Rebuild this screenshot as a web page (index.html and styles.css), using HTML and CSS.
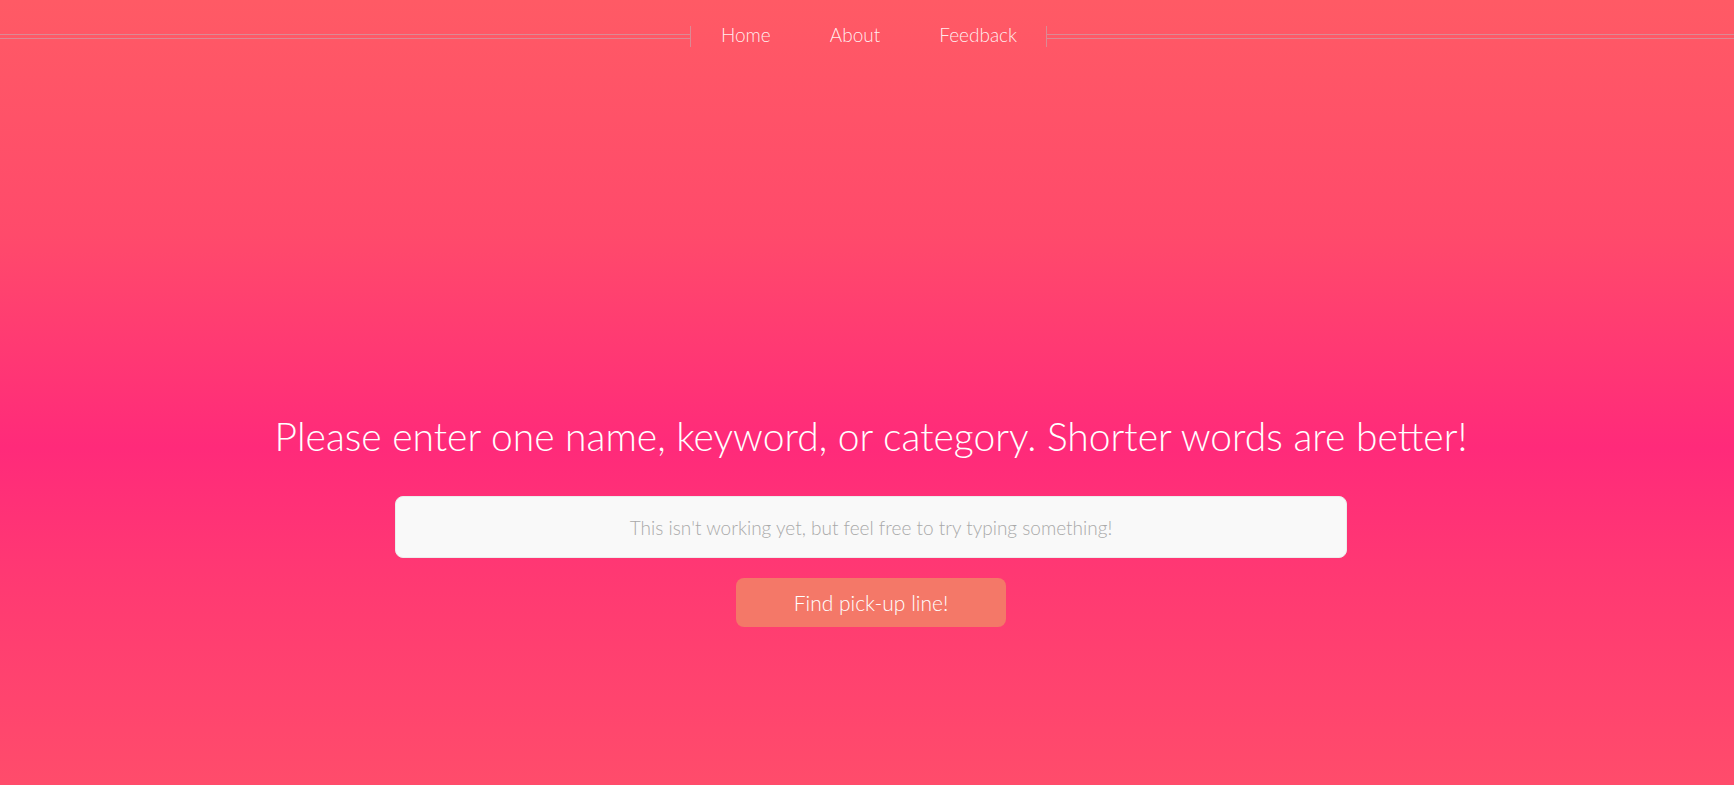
FILE: index.html
```html
<!DOCTYPE html>
<html lang="en">
<head>
<meta charset="utf-8">
<title>Pick-up lines</title>
<link rel="stylesheet" href="styles.css">
</head>
<body>
<header class="topbar">
  <span class="rule rule-left"></span>
  <nav class="menu">
    <a class="menu-link" href="#">Home</a>
    <a class="menu-link" href="#">About</a>
    <a class="menu-link" href="#">Feedback</a>
  </nav>
  <span class="rule"></span>
</header>
<main class="hero">
  <h1 class="prompt">Please enter one name, keyword, or category. Shorter words are better!</h1>
  <form class="search" onsubmit="return false">
    <input class="search-input" type="text" placeholder="This isn't working yet, but feel free to try typing something!">
    <button class="search-button" type="submit">Find pick-up line!</button>
  </form>
</main>
</body>
</html>
```
FILE: styles.css
```css
html, body {
  margin: 0;
  padding: 0;
}
body {
  min-height: 100vh;
  background: linear-gradient(to bottom, #ff5a65 0%, #ff4a6b 30%, #ff2a7a 57%, #ff3a72 75%, #ff4c6b 100%);
  font-family: Lato, "Open Sans", "Liberation Sans", sans-serif;
  font-weight: 300;
  color: #fff;
}
.topbar {
  display: flex;
  align-items: center;
  padding-top: 26px;
  height: 21px;
}
.rule {
  flex: 1 1 0;
  height: 3px;
  border-top: 1px solid rgba(210, 150, 160, 0.8);
  border-bottom: 1px solid rgba(210, 150, 160, 0.8);
}
.rule-left {
  flex-basis: 3px;
}
.menu {
  display: flex;
  height: 21px;
  align-items: center;
  border-left: 1px solid rgba(210, 150, 160, 0.8);
  border-right: 1px solid rgba(210, 150, 160, 0.8);
}
.menu-link {
  color: rgba(255, 255, 255, 0.9);
  text-decoration: none;
  font-size: 19px;
  padding: 0 29px 0 30px;
  line-height: 21px;
  margin-top: -4px;
}
.hero {
  display: flex;
  flex-direction: column;
  align-items: center;
  padding-top: 365px;
  padding-left: 8px;
}
.prompt {
  margin: 0;
  font-weight: 300;
  font-size: 39px;
  line-height: 48px;
  color: #fff;
}
.search {
  display: flex;
  flex-direction: column;
  align-items: center;
  margin-top: 36px;
}
.search-input {
  box-sizing: border-box;
  width: 952px;
  height: 62px;
  border: 1px solid #ececec;
  border-radius: 8px;
  background: #f9f9f9;
  text-align: center;
  font-family: inherit;
  font-weight: 300;
  font-size: 19px;
  color: #555;
  outline: none;
}
.search-input::placeholder {
  color: #a9a9a9;
}
.search-button {
  margin-top: 20px;
  width: 270px;
  height: 49px;
  border: none;
  border-radius: 8px;
  background: #f47868;
  color: #fff;
  font-family: inherit;
  font-weight: 300;
  font-size: 21px;
  cursor: pointer;
}
```
